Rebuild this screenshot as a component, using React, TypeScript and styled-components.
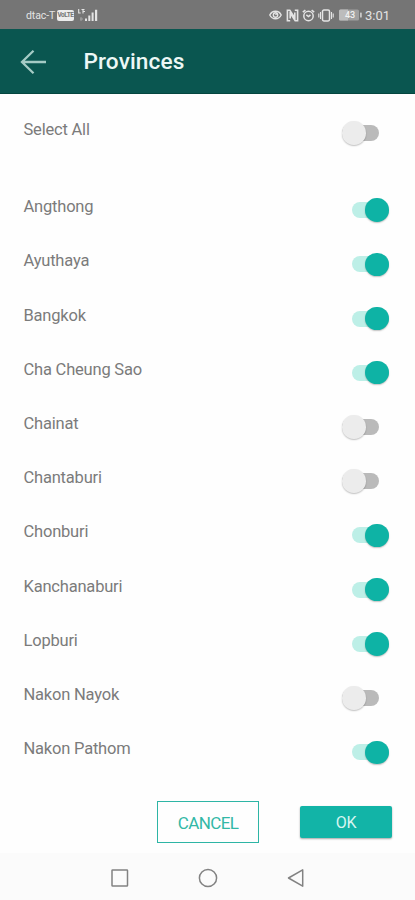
import React from 'react';
import styled, { createGlobalStyle } from 'styled-components';

const GlobalStyle = createGlobalStyle`
  *, *::before, *::after { box-sizing: border-box; }
  html, body { margin: 0; padding: 0; background: #fefefe; }
  body { font-family: Roboto, sans-serif; }
`;

const Screen = styled.div`
  display: flex;
  flex-direction: column;
  width: 415px;
  height: 900px;
  overflow: hidden;
  background: #fefefe;
`;

const StatusBar = styled.header`
  display: flex;
  justify-content: space-between;
  flex: none;
  height: 29px;
  padding: 1px 25px 0 26px;
  background: #757575;
  color: #e4e4e4;
`;

const StatusGroup = styled.div`
  display: flex;
  align-items: center;
`;

const Carrier = styled.span`
  width: 31px;
  padding-top: 1px;
  font-size: 10.5px;
  line-height: 14px;
  white-space: nowrap;
  letter-spacing: -0.1px;
`;

const VolteBadge = styled.span`
  width: 17px;
  height: 11px;
  border-radius: 2px;
  background: #ececec;
  color: #757575;
  font-size: 6.5px;
  font-weight: 700;
  line-height: 11px;
  text-align: center;
  letter-spacing: -0.4px;
`;

const Clock = styled.span`
  width: 25px;
  margin-left: 3px;
  padding-top: 1px;
  font-size: 13px;
  line-height: 14px;
  white-space: nowrap;
`;

const StatusIcon = styled.svg<{ $gap?: number }>`
  display: block;
  flex: none;
  margin-left: ${({ $gap = 0 }) => $gap}px;
`;

const AppBar = styled.div`
  display: flex;
  align-items: center;
  flex: none;
  height: 64.5px;
  padding: 3px 20px 0 19.5px;
  gap: 37px;
  background: #0a5650;
  border-bottom: 1px solid #04463f;
`;

const BackButton = styled.button`
  display: flex;
  padding: 0;
  border: 0;
  background: none;
`;

const Title = styled.h1`
  margin: 0;
  color: #edf8f6;
  font-size: 22.6px;
  font-weight: 500;
  line-height: 28px;
  letter-spacing: 0.12px;
`;

const SelectAllSection = styled.div`
  flex: none;
  padding: 8.5px 0 23px;
`;

const ProvinceList = styled.ul`
  flex: none;
  margin: 0;
  padding: 0;
  list-style: none;
`;

const Row = styled.label`
  display: flex;
  align-items: center;
  justify-content: space-between;
  height: 54.22px;
  padding: 0 26.3px 0 23.5px;
`;

const Label = styled.span`
  padding-top: 1.6px;
  color: #7b7b7b;
  font-size: 16.5px;
  line-height: 20px;
  letter-spacing: -0.2px;
`;

const Track = styled.span<{ $on: boolean }>`
  display: flex;
  align-items: center;
  justify-content: ${({ $on }) => ($on ? 'flex-end' : 'flex-start')};
  width: 36.7px;
  height: 16px;
  margin-top: 7.5px;
  margin-right: ${({ $on }) => ($on ? 0 : 9.8)}px;
  border-radius: 8px;
  background: ${({ $on }) => ($on ? '#bdefe7' : '#bababa')};
`;

const Thumb = styled.span<{ $on: boolean }>`
  flex: none;
  width: 23.5px;
  height: 23.5px;
  border-radius: 50%;
  background: ${({ $on }) => ($on ? '#0eb3a5' : '#ececec')};
  box-shadow: 0 1px 1.5px rgba(0, 0, 0, 0.24);
`;

const Actions = styled.div`
  display: flex;
  align-items: center;
  justify-content: flex-end;
  flex: none;
  gap: 41px;
  height: 43px;
  margin-top: 25.2px;
  padding-right: 23px;
`;

const ActionButton = styled.button<{ $primary?: boolean }>`
  width: ${({ $primary }) => ($primary ? 92 : 102)}px;
  height: ${({ $primary }) => ($primary ? 32 : 42)}px;
  padding: 1px 0 0;
  border: ${({ $primary }) => ($primary ? '0' : '1px solid #2db5a5')};
  border-radius: ${({ $primary }) => ($primary ? 2 : 0)}px;
  background: ${({ $primary }) => ($primary ? '#12b4a7' : '#fefefe')};
  box-shadow: ${({ $primary }) => ($primary ? '0 1px 2px rgba(0, 0, 0, 0.35)' : 'none')};
  color: ${({ $primary }) => ($primary ? '#d7f6f1' : '#32b8a6')};
  font-family: inherit;
  font-size: ${({ $primary }) => ($primary ? 16 : 17)}px;
  line-height: 20px;
  letter-spacing: ${({ $primary }) => ($primary ? -0.3 : -0.6)}px;
`;

const NavBar = styled.nav`
  display: flex;
  align-items: center;
  justify-content: center;
  gap: 68px;
  flex: none;
  height: 47px;
  margin-top: auto;
  padding-top: 3px;
  background: #fbfbfb;
`;

const NavIcon = styled.svg`
  display: block;
  fill: none;
  stroke: #828282;
  stroke-width: 1.5;
`;

const provinces = [
  { name: 'Angthong', on: true },
  { name: 'Ayuthaya', on: true },
  { name: 'Bangkok', on: true },
  { name: 'Cha Cheung Sao', on: true },
  { name: 'Chainat', on: false },
  { name: 'Chantaburi', on: false },
  { name: 'Chonburi', on: true },
  { name: 'Kanchanaburi', on: true },
  { name: 'Lopburi', on: true },
  { name: 'Nakon Nayok', on: false },
  { name: 'Nakon Pathom', on: true },
];

function ToggleRow({ name, on }: { name: string; on: boolean }) {
  return (
    <Row>
      <Label>{name}</Label>
      <Track $on={on} role="switch" aria-checked={on} aria-label={name}>
        <Thumb $on={on} />
      </Track>
    </Row>
  );
}

function SignalIcon() {
  return (
    <StatusIcon $gap={4} width="20" height="13" viewBox="0 0 20 13" fill="#e4e4e4">
      <path d="M.7 0v4h2M5 .5v4M3.5.5h3M5 2.5h2" fill="none" stroke="#e4e4e4" strokeWidth="1.1" />
      <path d="M2 10h3M3 8v4" stroke="#a5a5a5" fill="none" />
      <path d="M7 9.5h2V12H7zM10.3 6.5h2V12h-2zM13.6 3.5h2V12h-2zM17 .8h2.2V12H17z" />
    </StatusIcon>
  );
}

function EyeIcon() {
  return (
    <StatusIcon width="13" height="12" viewBox="0 0 13 12" fill="none" stroke="#e4e4e4" strokeWidth="1.4">
      <path d="M.8 6C3.2 1 9.8 1 12.2 6 9.8 11 3.2 11 .8 6Z" />
      <circle cx="6.5" cy="6" r="2.2" />
      <path d="m6.5 5.8 1.6-1.6" />
    </StatusIcon>
  );
}

function NfcIcon() {
  return (
    <StatusIcon $gap={4} width="13" height="13" viewBox="0 0 13 13" fill="none" stroke="#e4e4e4" strokeWidth="1.6">
      <path d="M4.2 11.8H1.4V1.2h2.4L8.8 9V3.5M8.8 1.2h2.8v10.6H9.2L4.2 4v5.5" />
    </StatusIcon>
  );
}

function AlarmIcon() {
  return (
    <StatusIcon $gap={3} width="13" height="13" viewBox="0 0 13 13" fill="none" stroke="#e4e4e4" strokeWidth="1.5">
      <circle cx="6.5" cy="7" r="4.7" />
      <path d="m.8 3.2 2.6-2.1M12.2 3.2 9.6 1.1M4.3 5.8l2.2 1.8 2-1.7" />
    </StatusIcon>
  );
}

function VibrateIcon() {
  return (
    <StatusIcon $gap={3} width="16" height="13" viewBox="0 0 16 13" fill="none" stroke="#e4e4e4" strokeWidth="1.5">
      <rect x="4.5" y="1" width="7" height="11" rx="1.4" />
      <path d="M2.5 3v7M.8 4.5v4M13.5 3v7M15.2 4.5v4" strokeWidth="1.1" />
    </StatusIcon>
  );
}

function BatteryIcon() {
  return (
    <StatusIcon $gap={5} width="23" height="12" viewBox="0 0 23 12">
      <rect x="0" y=".5" width="20" height="11" rx="1.5" fill="#a0a0a0" />
      <path d="M1.5.5H9v11H1.5A1.5 1.5 0 0 1 0 10V2A1.5 1.5 0 0 1 1.5.5Z" fill="#bcbcbc" />
      <rect x="21" y="3.5" width="1.8" height="5" rx=".6" fill="#c7c7c7" />
      <text x="11" y="9.3" textAnchor="middle" fill="#f1f1f1" fontFamily="Roboto" fontSize="9" fontWeight="500">43</text>
    </StatusIcon>
  );
}

export default function App() {
  return (
    <Screen>
      <GlobalStyle />
      <StatusBar>
        <StatusGroup>
          <Carrier>dtac-T</Carrier>
          <VolteBadge>VoLTE</VolteBadge>
          <SignalIcon />
        </StatusGroup>
        <StatusGroup>
          <EyeIcon />
          <NfcIcon />
          <AlarmIcon />
          <VibrateIcon />
          <BatteryIcon />
          <Clock>3:01</Clock>
        </StatusGroup>
      </StatusBar>
      <AppBar>
        <BackButton aria-label="Back">
          <svg width="27" height="26" viewBox="0 0 27 26" fill="none" stroke="#a5cbc5" strokeWidth="2.3">
            <path d="M26 13H2M13.5 1.8 2 13l11.5 11.2" />
          </svg>
        </BackButton>
        <Title>Provinces</Title>
      </AppBar>
      <SelectAllSection>
        <ToggleRow name="Select All" on={false} />
      </SelectAllSection>
      <ProvinceList>
        {provinces.map((province) => (
          <li key={province.name}>
            <ToggleRow {...province} />
          </li>
        ))}
      </ProvinceList>
      <Actions>
        <ActionButton type="button">CANCEL</ActionButton>
        <ActionButton type="button" $primary>OK</ActionButton>
      </Actions>
      <NavBar>
        <NavIcon width="20" height="20" viewBox="0 0 20 20">
          <rect x="2" y="2" width="15.5" height="16" rx="0.6" />
        </NavIcon>
        <NavIcon width="20" height="20" viewBox="0 0 20 20">
          <circle cx="10" cy="10" r="8.6" />
        </NavIcon>
        <NavIcon width="20" height="20" viewBox="0 0 20 20">
          <path d="M16.7 1.8v16.4L2.5 10Z" strokeLinejoin="round" />
        </NavIcon>
      </NavBar>
    </Screen>
  );
}
